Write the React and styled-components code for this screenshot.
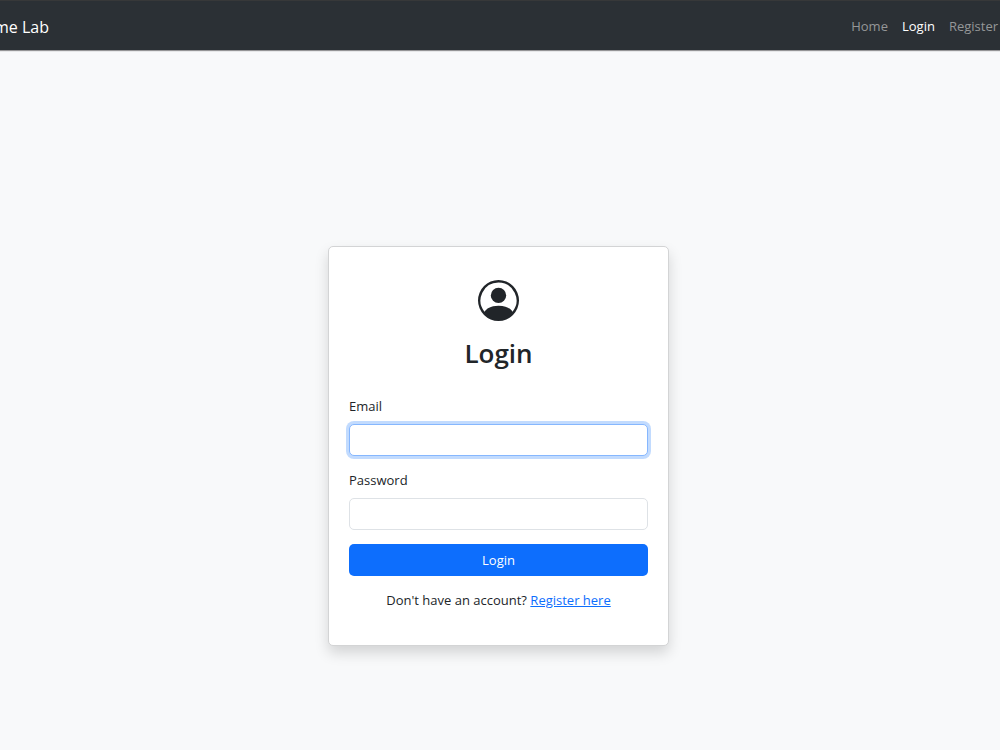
import React from 'react';
import styled, { createGlobalStyle } from 'styled-components';
import { BsPersonCircle } from 'react-icons/bs';

const GlobalStyle = createGlobalStyle`
    *, *::before, *::after {
        box-sizing: border-box;
    }
    body {
        margin: 0;
        background: #f8f9fa;
        color: #212529;
        font-family: "Segoe UI", "Open Sans", "Noto Sans", sans-serif;
        font-size: 13px;
        line-height: 21px;
    }
`;

const Page = styled.div`
    display: flex;
    flex-direction: column;
    min-height: 100vh;
    overflow-x: hidden;
`;

const Navbar = styled.nav`
    display: flex;
    align-items: center;
    justify-content: space-between;
    height: 50px;
    padding: 3px 2px 0 0;
    border-top: 1px solid #373839;
    background: #2b3035;
    box-shadow: 0 1px 1px rgba(0, 0, 0, 0.4);
`;

const Brand = styled.a`
    margin-left: -6px;
    color: #fff;
    font-size: 16px;
    font-weight: 500;
    line-height: 24px;
    text-decoration: none;
`;

const NavLinks = styled.div`
    display: flex;
    gap: 14px;
    padding-bottom: 2px;
`;

const NavLink = styled.a`
    color: ${({ $active }) => ($active ? '#fff' : '#959798')};
    text-decoration: none;
`;

const Main = styled.main`
    display: flex;
    flex: 1;
    align-items: center;
    justify-content: center;
    padding: 92px 3px 0 0;
`;

const Card = styled.div`
    width: 100%;
    max-width: 341px;
    padding: 33px 20px 34px;
    border: 1px solid #d3d4d5;
    border-radius: 5px;
    background: #fff;
    box-shadow: 0 7px 14px rgba(0, 0, 0, 0.15);
`;

const CardHeader = styled.div`
    display: flex;
    flex-direction: column;
    align-items: center;
    gap: 16px;
    margin-bottom: 27px;
`;

const Title = styled.h1`
    margin: 0;
    font-size: 26px;
    font-weight: 600;
    line-height: 32px;
`;

const Field = styled.div`
    display: flex;
    flex-direction: column;
    gap: 7px;
    margin-bottom: 14px;
`;

const Input = styled.input`
    width: 100%;
    height: 32px;
    padding: 5px 10px;
    border: 1px solid #dee2e6;
    border-radius: 5px;
    outline: 0;
    background: #fff;
    color: inherit;
    font: inherit;

    &:focus {
        border-color: #86b7fe;
        box-shadow: 0 0 0 3px rgba(13, 110, 253, 0.25);
    }
`;

const SubmitButton = styled.button`
    width: 100%;
    height: 32px;
    border: 0;
    border-radius: 5px;
    background: #0d6efd;
    color: #fff;
    font: inherit;
    cursor: pointer;
`;

const Footnote = styled.p`
    margin: 14px 0 0;
    text-align: center;
`;

const RegisterLink = styled.a`
    color: #0d6efd;
`;

const App = () => {
    return (
        <>
        <GlobalStyle />
        <Page>
            <Navbar>
                <Brand href="#">me Lab</Brand>
                <NavLinks>
                    <NavLink href="#home">Home</NavLink>
                    <NavLink href="#login" $active>Login</NavLink>
                    <NavLink href="#register">Register</NavLink>
                </NavLinks>
            </Navbar>
            <Main>
                <Card>
                    <CardHeader>
                        <BsPersonCircle size={41} />
                        <Title>Login</Title>
                    </CardHeader>
                    <form onSubmit={(e) => e.preventDefault()}>
                        <Field>
                            <label htmlFor="email">Email</label>
                            <Input id="email" type="email" autoFocus />
                        </Field>
                        <Field>
                            <label htmlFor="password">Password</label>
                            <Input id="password" type="password" />
                        </Field>
                        <SubmitButton type="submit">Login</SubmitButton>
                    </form>
                    <Footnote>
                        Don't have an account? <RegisterLink href="#register">Register here</RegisterLink>
                    </Footnote>
                </Card>
            </Main>
        </Page>
        </>
    )
}

export default App;
